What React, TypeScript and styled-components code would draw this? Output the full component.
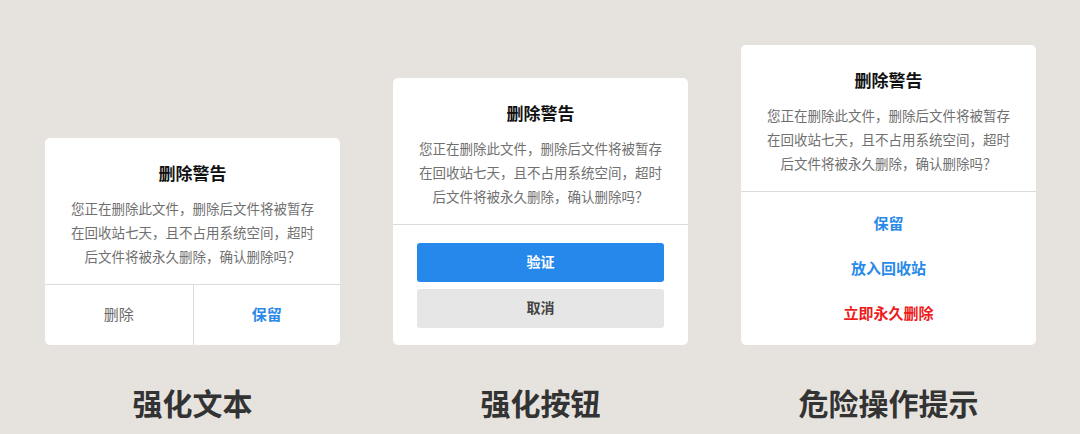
import React from "react";
import styled, { createGlobalStyle } from "styled-components";

const GlobalStyle = createGlobalStyle`
  html, body {
    margin: 0;
    padding: 0;
    background: #e6e3df;
    font-family: "Noto Sans CJK SC", "Noto Sans", sans-serif;
  }
`;

const bodyLines = [
  "您正在删除此文件，删除后文件将被暂存",
  "在回收站七天，且不占用系统空间，超时",
  "后文件将被永久删除，确认删除吗？",
];

function Message() {
  return (
    <>
      <Title>删除警告</Title>
      <Body>
        {bodyLines.map((line) => (
          <div key={line}>{line}</div>
        ))}
      </Body>
    </>
  );
}

function App() {
  return (
    <Page>
      <GlobalStyle />
      <Column>
        <CardArea>
          <Card>
            <Message />
            <SplitFooter>
              <SplitButton>删除</SplitButton>
              <SplitButton $primary>保留</SplitButton>
            </SplitFooter>
          </Card>
        </CardArea>
        <Label>强化文本</Label>
      </Column>
      <Column>
        <CardArea>
          <Card>
            <Message />
            <StackFooter>
              <BlockButton $primary>验证</BlockButton>
              <BlockButton>取消</BlockButton>
            </StackFooter>
          </Card>
        </CardArea>
        <Label>强化按钮</Label>
      </Column>
      <Column>
        <CardArea>
          <Card>
            <Message />
            <ListFooter>
              <ListButton $tone="blue">保留</ListButton>
              <ListButton $tone="blue">放入回收站</ListButton>
              <ListButton $tone="red">立即永久删除</ListButton>
            </ListFooter>
          </Card>
        </CardArea>
        <Label>危险操作提示</Label>
      </Column>
    </Page>
  );
}

export default App;

const Page = styled.div`
  width: 1080px;
  height: 434px;
  box-sizing: border-box;
  padding: 0 44px 0 45px;
  display: grid;
  grid-template-columns: repeat(3, 295px);
  column-gap: 53px;
  overflow: hidden;
`;

const Column = styled.div`
  display: flex;
  flex-direction: column;
`;

const CardArea = styled.div`
  height: 345px;
  display: flex;
  flex-direction: column;
  justify-content: flex-end;
`;

const Card = styled.div`
  background: #ffffff;
  border-radius: 5px;
  overflow: hidden;
`;

const Title = styled.div`
  padding-top: 23px;
  font-size: 17px;
  line-height: 24px;
  font-weight: 700;
  color: #111111;
  text-align: center;
`;

const Body = styled.div`
  padding: 11px 0 16px;
  font-size: 13.5px;
  line-height: 24px;
  color: #707070;
  text-align: center;
  border-bottom: 1px solid #dcdcdc;
`;

const SplitFooter = styled.div`
  display: grid;
  grid-template-columns: 1fr 1fr;
  height: 60px;
`;

const SplitButton = styled.div<{ $primary?: boolean }>`
  display: flex;
  align-items: center;
  justify-content: center;
  padding-bottom: 3px;
  font-size: 15px;
  font-weight: ${(p) => (p.$primary ? 700 : 400)};
  color: ${(p) => (p.$primary ? "#2a8ae8" : "#6a6a6a")};
  & + & {
    border-left: 1px solid #dcdcdc;
  }
`;

const StackFooter = styled.div`
  display: flex;
  flex-direction: column;
  gap: 7px;
  padding: 18px 24px 17px;
`;

const BlockButton = styled.div<{ $primary?: boolean }>`
  height: 39px;
  box-sizing: border-box;
  padding-bottom: 3px;
  border-radius: 3px;
  display: flex;
  align-items: center;
  justify-content: center;
  font-size: 14px;
  font-weight: 700;
  background: ${(p) => (p.$primary ? "#2588ea" : "#e6e6e6")};
  color: ${(p) => (p.$primary ? "#ffffff" : "#444444")};
`;

const ListFooter = styled.div`
  display: flex;
  flex-direction: column;
  padding: 8px 0 10px;
`;

const ListButton = styled.div<{ $tone: "blue" | "red" }>`
  height: 45px;
  display: flex;
  align-items: center;
  justify-content: center;
  font-size: 15px;
  font-weight: 700;
  color: ${(p) => (p.$tone === "red" ? "#ee1c1c" : "#2a8ae8")};
`;

const Label = styled.div`
  margin-top: 39px;
  font-size: 30px;
  line-height: 36px;
  font-weight: 700;
  color: #333333;
  text-align: center;
`;
